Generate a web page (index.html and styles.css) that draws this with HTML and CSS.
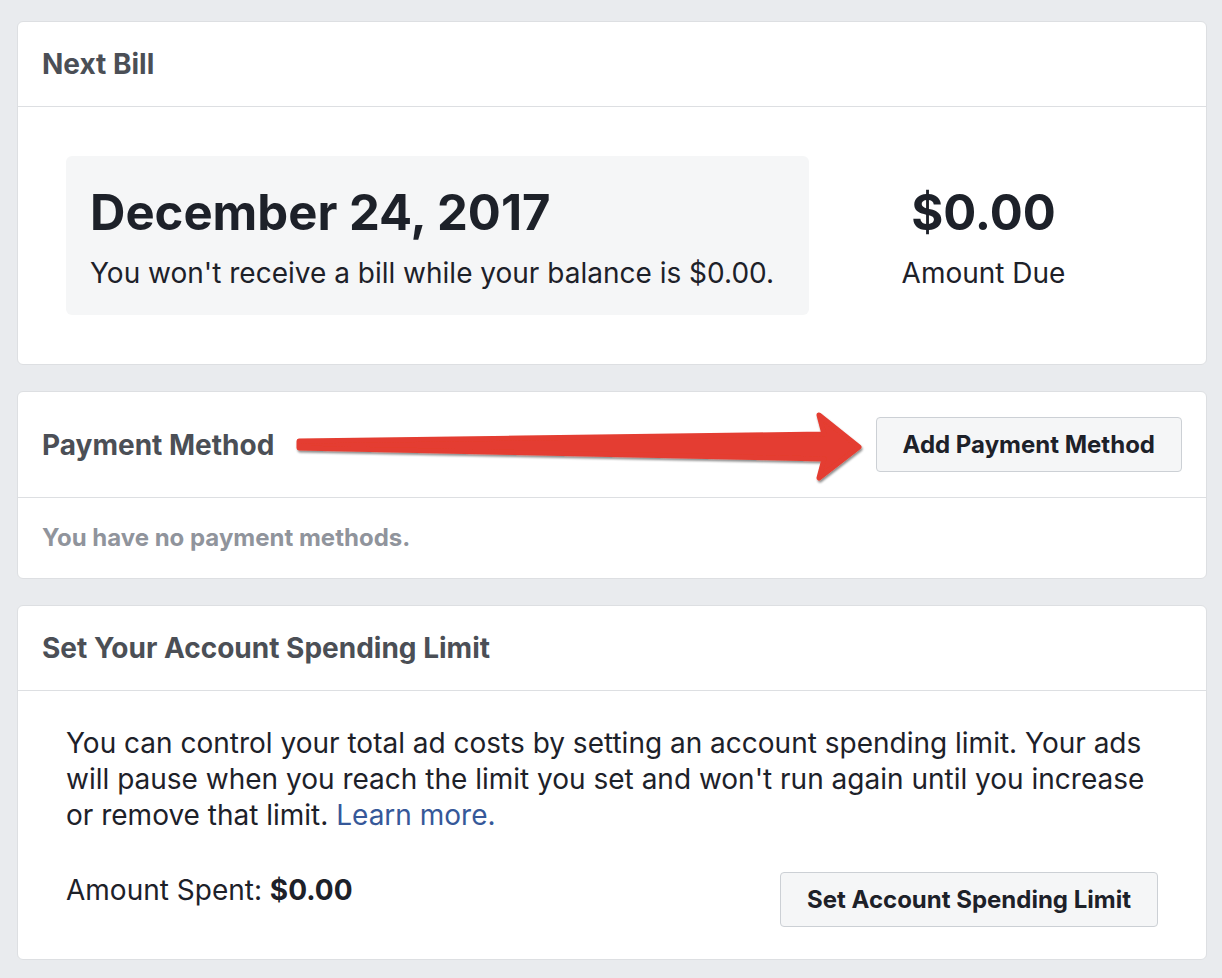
FILE: index.html
```html
<!DOCTYPE html>
<html>
<head>
<meta charset="utf-8">
<link rel="stylesheet" href="styles.css">
</head>
<body>
<div class="page">
  <section class="card">
    <header class="card-header">
      <h2 class="card-title">Next Bill</h2>
    </header>
    <div class="card-body bill-body">
      <div class="bill-box">
        <div class="bill-date">December 24, 2017</div>
        <div class="bill-note">You won't receive a bill while your balance is $0.00.</div>
      </div>
      <div class="bill-amount">
        <div class="amount-value">$0.00</div>
        <div class="amount-label">Amount Due</div>
      </div>
    </div>
  </section>

  <section class="card card-annotated">
    <header class="card-header header-with-action">
      <h2 class="card-title">Payment Method</h2>
      <button class="btn">Add Payment Method</button>
    </header>
    <div class="card-body empty-body">
      <p class="empty-note">You have no payment methods.</p>
    </div>
    <svg class="arrow" width="900" height="110" viewBox="0 0 900 110">
      <defs>
        <filter id="sh" x="-5%" y="-30%" width="110%" height="160%">
          <feDropShadow dx="1" dy="2" stdDeviation="0.8" flood-color="#000" flood-opacity="0.45"/>
        </filter>
      </defs>
      <polygon filter="url(#sh)" points="281,49 806,42 801,23 841,55 801,86 806,67 281,56" fill="#e43d30" stroke="#e43d30" stroke-width="5" stroke-linejoin="round"/>
    </svg>
  </section>

  <section class="card">
    <header class="card-header">
      <h2 class="card-title">Set Your Account Spending Limit</h2>
    </header>
    <div class="card-body limit-body">
      <p class="limit-text">You can control your total ad costs by setting an account spending limit. Your ads will pause when you reach the limit you set and won't run again until you increase or remove that limit. <a class="link" href="#">Learn more.</a></p>
      <div class="limit-row">
        <div class="spent">Amount Spent: <strong>$0.00</strong></div>
        <button class="btn">Set Account Spending Limit</button>
      </div>
    </div>
  </section>
</div>
</body>
</html>
```

FILE: styles.css
```css
* { box-sizing: border-box; }
html, body { margin: 0; padding: 0; }
body {
  background: #e9ebee;
  font-family: Inter, "Liberation Sans", Arial, sans-serif;
  color: #1d2129;
}
.page {
  width: 1190px;
  margin: 21px 0 0 17px;
  display: flex;
  flex-direction: column;
  gap: 26px;
}
.card {
  background: #fff;
  border: 1px solid #dddfe2;
  border-radius: 6px;
}
.card-annotated { position: relative; }
.card-header {
  border-bottom: 1px solid #dddfe2;
  padding: 25px 24px;
}
.header-with-action {
  display: flex;
  align-items: center;
  justify-content: space-between;
}
.card-title {
  margin: 0;
  font-size: 28px;
  line-height: 34px;
  font-weight: 700;
  color: #4b4f56;
}
.bill-body {
  display: flex;
  align-items: flex-start;
  padding: 49px 48px 49px;
}
.bill-box {
  width: 743px;
  background: #f5f6f7;
  border-radius: 6px;
  padding: 27px 24px 25px;
}
.bill-date {
  font-size: 49px;
  line-height: 60px;
  font-weight: 700;
}
.bill-note {
  margin-top: 13px;
  font-size: 28px;
  line-height: 34px;
}
.bill-amount {
  flex: 1;
  text-align: center;
  padding-top: 27px;
}
.amount-value {
  font-size: 49px;
  line-height: 60px;
  font-weight: 700;
}
.amount-label {
  margin-top: 13px;
  font-size: 28px;
  line-height: 34px;
}
.btn {
  font-family: inherit;
  font-size: 24px;
  font-weight: 700;
  color: #1d2129;
  background: #f5f6f7;
  border: 1px solid #ccd0d5;
  border-radius: 4px;
  height: 55px;
  padding: 0 26px;
}
.empty-body { padding: 24px 24px 25px; }
.empty-note {
  margin: 0;
  font-size: 24px;
  line-height: 31px;
  font-weight: 700;
  color: #90949c;
}
.arrow {
  position: absolute;
  left: 0;
  top: 0;
  pointer-events: none;
}
.limit-body { padding: 34px 48px 32px; }
.limit-text {
  margin: 0;
  font-size: 28px;
  line-height: 36px;
}
.link { color: #365899; text-decoration: none; }
.limit-row {
  margin-top: 39px;
  display: flex;
  align-items: flex-start;
  justify-content: space-between;
}
.spent {
  font-size: 28px;
  line-height: 36px;
}
.spent strong { font-weight: 700; }
```
